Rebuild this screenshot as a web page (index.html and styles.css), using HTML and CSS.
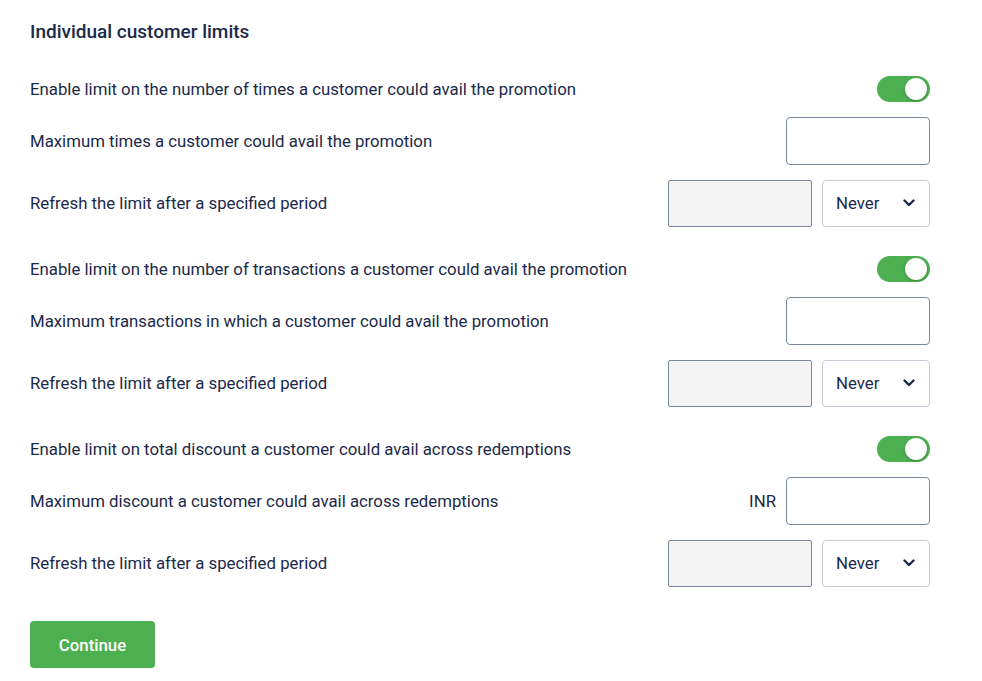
FILE: index.html
```html
<!DOCTYPE html>
<html lang="en">
<head>
<meta charset="UTF-8">
<title>Individual customer limits</title>
<link rel="stylesheet" href="styles.css">
</head>
<body>

<div class="page">
  <h2 class="title">Individual customer limits</h2>

  <!-- Times limit -->
  <div class="group">
    <div class="row row-toggle">
      <span class="label">Enable limit on the number of times a customer could avail the promotion</span>
      <span class="toggle"><span class="knob"></span></span>
    </div>
    <div class="row row-input">
      <span class="label">Maximum times a customer could avail the promotion</span>
      <input class="field" type="text">
    </div>
    <div class="row row-input">
      <span class="label">Refresh the limit after a specified period</span>
      <div class="controls">
        <input class="field field-disabled" type="text" disabled>
        <div class="select">Never
          <svg width="12" height="8" viewBox="0 0 12 8"><path d="M1.5 1.5 L6 6 L10.5 1.5" fill="none" stroke="#1b2a4a" stroke-width="2.4" stroke-linecap="round" stroke-linejoin="round"/></svg>
        </div>
      </div>
    </div>
  </div>

  <!-- Transactions limit -->
  <div class="group">
    <div class="row row-toggle">
      <span class="label">Enable limit on the number of transactions a customer could avail the promotion</span>
      <span class="toggle"><span class="knob"></span></span>
    </div>
    <div class="row row-input">
      <span class="label">Maximum transactions in which a customer could avail the promotion</span>
      <input class="field" type="text">
    </div>
    <div class="row row-input">
      <span class="label">Refresh the limit after a specified period</span>
      <div class="controls">
        <input class="field field-disabled" type="text" disabled>
        <div class="select">Never
          <svg width="12" height="8" viewBox="0 0 12 8"><path d="M1.5 1.5 L6 6 L10.5 1.5" fill="none" stroke="#1b2a4a" stroke-width="2.4" stroke-linecap="round" stroke-linejoin="round"/></svg>
        </div>
      </div>
    </div>
  </div>

  <!-- Discount limit -->
  <div class="group">
    <div class="row row-toggle">
      <span class="label">Enable limit on total discount a customer could avail across redemptions</span>
      <span class="toggle"><span class="knob"></span></span>
    </div>
    <div class="row row-input">
      <span class="label">Maximum discount a customer could avail across redemptions</span>
      <div class="controls">
        <span class="unit">INR</span>
        <input class="field" type="text">
      </div>
    </div>
    <div class="row row-input">
      <span class="label">Refresh the limit after a specified period</span>
      <div class="controls">
        <input class="field field-disabled" type="text" disabled>
        <div class="select">Never
          <svg width="12" height="8" viewBox="0 0 12 8"><path d="M1.5 1.5 L6 6 L10.5 1.5" fill="none" stroke="#1b2a4a" stroke-width="2.4" stroke-linecap="round" stroke-linejoin="round"/></svg>
        </div>
      </div>
    </div>
  </div>

  <button class="btn">Continue</button>
</div>

</body>
</html>
```

FILE: styles.css
```css
/* Reset */
* {
  margin: 0;
  padding: 0;
  box-sizing: border-box;
}
body, html {
  font-family: Roboto, "Liberation Sans", sans-serif;
  background: #fff;
  color: #1b2a4a;
}

.page {
  width: 930px;
  padding: 21px 0 0 30px;
}

.title {
  font-size: 19px;
  font-weight: 500;
  line-height: 22px;
  margin-bottom: 33px;
}

/* Groups and rows */
.group {
  display: flex;
  flex-direction: column;
  gap: 15px;
  margin-bottom: 29px;
}
.row {
  display: flex;
  align-items: center;
  justify-content: space-between;
}
.row-toggle {
  height: 26px;
}
.row-input {
  height: 47.5px;
}
.label {
  font-size: 16.8px;
}

/* Toggle */
.toggle {
  width: 53px;
  height: 26px;
  border-radius: 13px;
  background: #4caf50;
  position: relative;
}
.knob {
  position: absolute;
  top: 2px;
  right: 3px;
  width: 22px;
  height: 22px;
  border-radius: 50%;
  background: #fff;
  box-shadow: 0 1px 3px rgba(0, 0, 0, 0.25);
}

/* Inputs */
.controls {
  display: flex;
  align-items: center;
  gap: 10px;
}
.field {
  width: 144px;
  height: 47.5px;
  border: 1px solid #7b889d;
  border-radius: 4px;
  background: #fff;
  font: inherit;
}
.field-disabled {
  background: #f4f4f4;
  border-radius: 2px;
}
.unit {
  font-size: 16.8px;
}
.select {
  width: 108px;
  height: 47.5px;
  border: 1px solid #c8ccd6;
  border-radius: 4px;
  display: flex;
  align-items: center;
  justify-content: space-between;
  padding: 0 14px 0 13px;
  font-size: 16.8px;
}

/* Button */
.btn {
  margin-top: 5px;
  width: 125px;
  height: 47px;
  border: none;
  border-radius: 4px;
  background: #4caf50;
  color: #fff;
  font-family: Roboto, "Liberation Sans", sans-serif;
  font-size: 16.8px;
  font-weight: 500;
}
```
